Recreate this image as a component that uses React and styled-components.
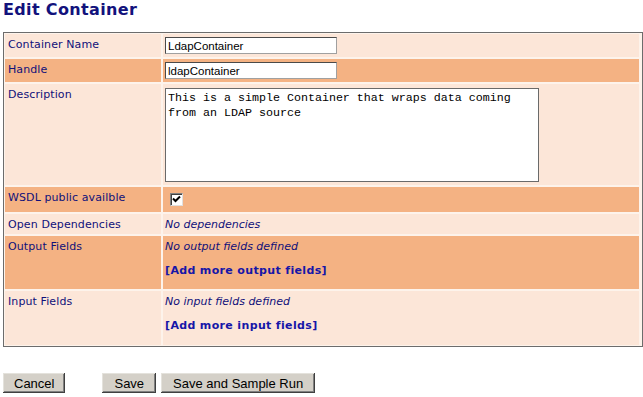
import React from "react";
import styled, { createGlobalStyle } from "styled-components";

const GlobalStyle = createGlobalStyle`
  html, body {
    margin: 0;
    padding: 0;
    background: #ffffff;
  }
`;

const Page = styled.div`
  padding: 0 3px;
  font-family: "DejaVu Sans", Verdana, sans-serif;
`;

const Title = styled.h1`
  margin: 0 0 13px;
  font-size: 16px;
  line-height: 19px;
  letter-spacing: 0.35px;
  font-weight: bold;
  color: #12127c;
`;

const FormGrid = styled.div`
  display: grid;
  width: 636px;
  grid-template-columns: 156px 476px;
  grid-template-rows: 23px 23px 101px 25px 20px 53px 54px;
  gap: 2px;
  padding: 1px;
  border: 1px solid #6c6c6c;
  background: #fdf3eb;
`;

const Cell = styled.div`
  background: ${(p) => (p.$dark ? "#f4b283" : "#fce6d8")};
  font-size: 11px;
  line-height: 13px;
  color: #10107a;
`;

const Label = styled(Cell)`
  padding: 4px 3px 0;
  letter-spacing: 0.1px;
`;

const Value = styled(Cell)`
  padding: 3px 2px 0;
`;

const TextInput = styled.input`
  display: block;
  box-sizing: border-box;
  width: 172px;
  height: 17px;
  margin: 0;
  padding: 0 2px;
  border: 1px solid #4a4a4a;
  border-right-color: #a0a0a0;
  border-bottom-color: #a0a0a0;
  background: #fff;
  font-family: "Liberation Sans", Arial, sans-serif;
  font-size: 11.5px;
  color: #000;
  outline: none;
`;

const TextArea = styled.textarea`
  display: block;
  box-sizing: border-box;
  width: 374px;
  height: 94px;
  margin: 1px 0 0;
  padding: 2px 2px;
  border: 1px solid #6a6a6a;
  background: #fff;
  font-family: "Liberation Mono", "Courier New", monospace;
  font-size: 11.67px;
  line-height: 15px;
  color: #000;
  resize: none;
  outline: none;
`;

const CheckBox = styled.span`
  display: block;
  box-sizing: border-box;
  width: 13px;
  height: 13px;
  margin: 3px 0 0 5px;
  background: #fff;
  border: 1px solid #808080;
  border-right-color: #e0e0e0;
  border-bottom-color: #e0e0e0;
  box-shadow: inset 1px 1px #404040;

  svg {
    display: block;
    margin: 1px 0 0 1px;
  }
`;

const Note = styled.div`
  font-style: italic;
  padding-top: 1px;
`;

const AddLink = styled.a`
  display: block;
  margin-top: 11px;
  font-weight: bold;
  letter-spacing: 0.35px;
  color: #1616a8;
  text-decoration: none;
  cursor: pointer;
`;

const Buttons = styled.div`
  display: flex;
  margin-top: 26px;
`;

const Button = styled.button`
  height: 20px;
  margin: 0 ${(p) => p.$gap || 0}px 0 0;
  padding: 0 ${(p) => p.$pad || 12}px;
  border: none;
  background: #d4d0c8;
  box-shadow: inset -1px -1px #404040, inset 1px 1px #e4e2dc,
    inset -2px -2px #808080;
  font-family: "Liberation Sans", Arial, sans-serif;
  font-size: 13px;
  color: #000;
  cursor: pointer;
`;

const Check = () => (
  <svg width="9" height="9" viewBox="0 0 9 9">
    <path d="M1 3.5 L3.5 6 L8 1.5" stroke="#000" strokeWidth="2" fill="none" />
  </svg>
);

export default function App() {
  return (
    <Page>
      <GlobalStyle />
      <Title>Edit Container</Title>
      <FormGrid>
        <Label>Container Name</Label>
        <Value>
          <TextInput defaultValue="LdapContainer" />
        </Value>

        <Label $dark>Handle</Label>
        <Value $dark>
          <TextInput defaultValue="ldapContainer" />
        </Value>

        <Label>Description</Label>
        <Value>
          <TextArea defaultValue="This is a simple Container that wraps data coming from an LDAP source" />
        </Value>

        <Label $dark>WSDL public availble</Label>
        <Value $dark>
          <CheckBox>
            <Check />
          </CheckBox>
        </Value>

        <Label>Open Dependencies</Label>
        <Value>
          <Note>No dependencies</Note>
        </Value>

        <Label $dark>Output Fields</Label>
        <Value $dark>
          <Note>No output fields defined</Note>
          <AddLink>[Add more output fields]</AddLink>
        </Value>

        <Label>Input Fields</Label>
        <Value>
          <Note>No input fields defined</Note>
          <AddLink>[Add more input fields]</AddLink>
        </Value>
      </FormGrid>
      <Buttons>
        <Button $pad={11} $gap={37}>Cancel</Button>
        <Button $pad={12} $gap={5}>Save</Button>
        <Button $pad={12}>Save and Sample Run</Button>
      </Buttons>
    </Page>
  );
}
